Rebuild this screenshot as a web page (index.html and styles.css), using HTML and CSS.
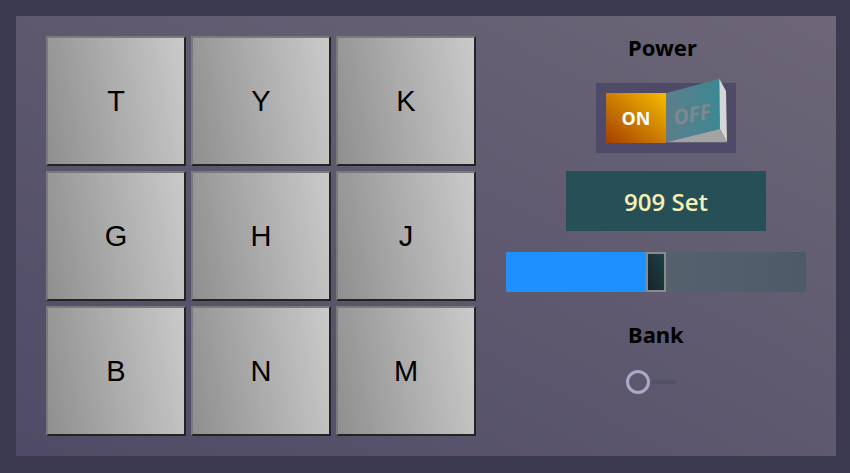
FILE: index.html
```html
<!DOCTYPE html>
<html>
<head>
<meta charset="utf-8">
<link rel="stylesheet" href="styles.css">
</head>
<body>
<div class="machine">
  <div class="pads">
    <div class="pad">T</div>
    <div class="pad">Y</div>
    <div class="pad">K</div>
    <div class="pad">G</div>
    <div class="pad">H</div>
    <div class="pad">J</div>
    <div class="pad">B</div>
    <div class="pad">N</div>
    <div class="pad">M</div>
  </div>
  <div class="controls">
    <div class="label label-power">Power</div>
    <div class="power-switch">
      <svg width="140" height="70" viewBox="0 0 140 70" overflow="visible">
        <defs>
          <linearGradient id="onGrad" x1="0" y1="1" x2="1" y2="0">
            <stop offset="0" stop-color="#a43f00"/>
            <stop offset="1" stop-color="#f5bd00"/>
          </linearGradient>
          <linearGradient id="offGrad" x1="0" y1="0" x2="1" y2="0">
            <stop offset="0" stop-color="#5d7e8b"/>
            <stop offset="1" stop-color="#3c8893"/>
          </linearGradient>
        </defs>
        <rect x="0" y="0" width="140" height="70" fill="#4f4a68"/>
        <rect x="10" y="10" width="60" height="50" fill="url(#onGrad)"/>
        <text x="40" y="42" text-anchor="middle" class="on-text">ON</text>
        <polygon points="70,10.3 123.3,-4.3 124,46 70,59.3" fill="url(#offGrad)"/>
        <polygon points="123.3,-4.3 130,8 131,59.3 124,46" fill="#d6d6d6"/>
        <polygon points="70,59.3 124,46 131,59.3" fill="#a3a3a3"/>
        <text x="96" y="39" text-anchor="middle" class="off-text" transform="rotate(-10 96 32)">OFF</text>
      </svg>
    </div>
    <div class="display">909 Set</div>
    <div class="slider">
      <div class="slider-fill" style="width: 140px"></div>
      <div class="slider-thumb"></div>
    </div>
    <div class="label label-bank">Bank</div>
    <div class="bank-switch">
      <div class="bank-knob"></div>
      <div class="bank-track"></div>
    </div>
  </div>
</div>
</body>
</html>
```
FILE: styles.css
```css
html, body {
  margin: 0;
  padding: 0;
}
body {
  background: #3a394f;
  width: 850px;
  height: 473px;
  overflow: hidden;
  padding: 16px;
  box-sizing: border-box;
}
.machine {
  width: 820px;
  height: 440px;
  box-sizing: border-box;
  padding: 20px 30px;
  background: linear-gradient(to top right, #4f4b66, #6c6677);
  display: flex;
}
.pads {
  display: grid;
  grid-template-columns: repeat(3, 140px);
  grid-auto-rows: 130px;
  gap: 5px;
}
.pad {
  box-sizing: border-box;
  border: 2px solid;
  border-color: #7a7a7a #232323 #232323 #7a7a7a;
  background: linear-gradient(80deg, #8f8f8f, #cacaca);
  display: flex;
  align-items: center;
  justify-content: center;
  font-family: "Liberation Sans", Arial, sans-serif;
  font-size: 29px;
  color: #000;
}
.controls {
  margin-left: 30px;
  width: 300px;
  display: flex;
  flex-direction: column;
  align-items: flex-start;
}
.label {
  font-family: "Noto Sans", "Open Sans", sans-serif;
  font-weight: bold;
  font-size: 22px;
  line-height: 23px;
  color: #000;
}
.label-power {
  margin-left: 122px;
  margin-top: 0;
}
.power-switch {
  margin-left: 90px;
  margin-top: 24px;
  width: 140px;
  height: 70px;
}
.power-switch svg {
  display: block;
}
.on-text {
  font-family: "Noto Sans", "Open Sans", sans-serif;
  font-weight: bold;
  font-size: 18px;
  fill: #fff;
}
.off-text {
  font-family: "Noto Sans", "Open Sans", sans-serif;
  font-weight: bold;
  font-style: italic;
  font-size: 21px;
  fill: #7f888f;
}
.display {
  margin-left: 60px;
  margin-top: 18px;
  width: 200px;
  height: 60px;
  background: #264f57;
  color: #f4efb3;
  font-family: "Open Sans", "Noto Sans", sans-serif;
  font-weight: 600;
  font-size: 24px;
  display: flex;
  align-items: center;
  justify-content: center;
}
.slider {
  margin-top: 21px;
  width: 300px;
  height: 40px;
  display: flex;
  background: linear-gradient(to right, #5c6a73, #4f5a68);
}
.slider-fill {
  height: 40px;
  background: #1e90ff;
}
.slider-thumb {
  box-sizing: border-box;
  width: 20px;
  height: 40px;
  border: 2px solid #8a8a8a;
  background: linear-gradient(to top right, #172429, #1e3f48);
}
.label-bank {
  margin-left: 122px;
  margin-top: 31px;
}
.bank-switch {
  margin-left: 120px;
  margin-top: 24px;
  display: flex;
  align-items: center;
}
.bank-knob {
  box-sizing: border-box;
  width: 24px;
  height: 24px;
  border-radius: 50%;
  border: 3.5px solid #aba8c9;
}
.bank-track {
  width: 24px;
  height: 4px;
  background: #54516a;
  margin-left: 2px;
}
```
